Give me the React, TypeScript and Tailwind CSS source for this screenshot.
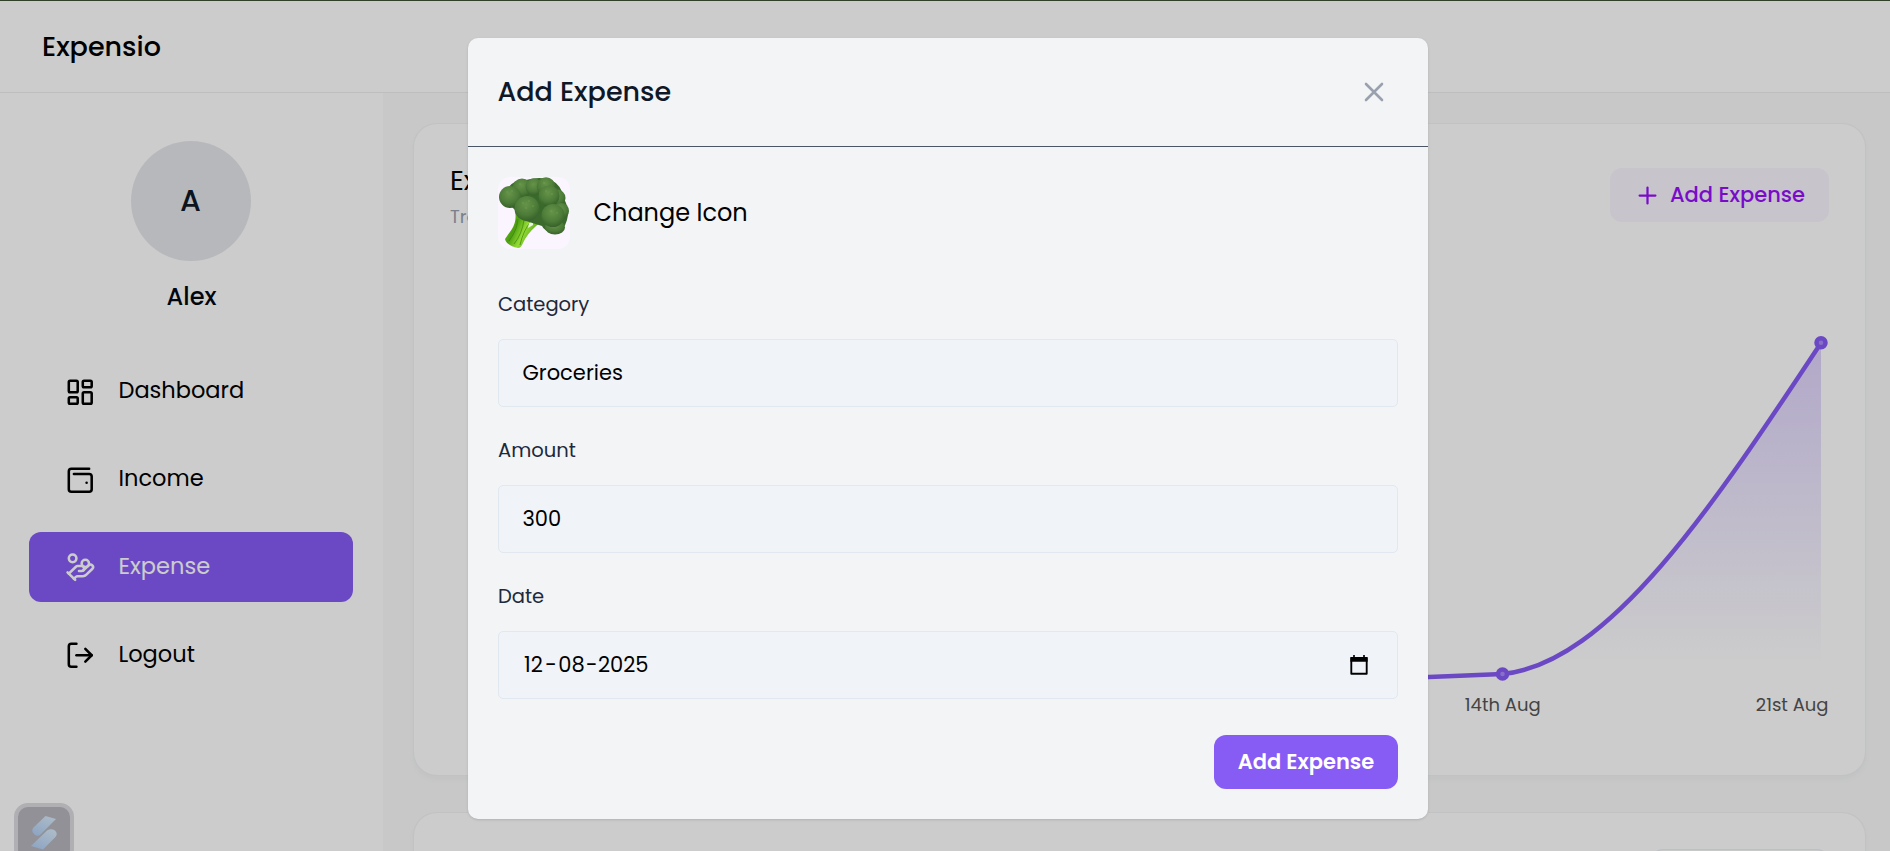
import type { ReactNode } from "react";
import { HandCoins, LayoutDashboard, LogOut, Plus, WalletMinimal } from "lucide-react";

function NavItem({ icon, label, active = false }: { icon: ReactNode; label: string; active?: boolean }) {
  return (
    <button
      className={`flex h-[70px] w-full items-center gap-[23.5px] rounded-xl pl-[35.5px] text-[22.5px] ${
        active ? "bg-[#875cf5] text-white" : "text-black"
      }`}
    >
      {icon}
      <span>{label}</span>
    </button>
  );
}

function Sidebar() {
  return (
    <aside className="flex w-[383px] shrink-0 flex-col bg-white px-[29px] pt-12">
      <div className="flex flex-col items-center">
        <div className="flex size-[120px] -translate-x-px items-center justify-center rounded-full bg-gray-200 text-3xl font-medium text-gray-900">
          A
        </div>
        <p className="mt-[22px] text-2xl leading-[28px] font-medium text-gray-950">Alex</p>
      </div>
      <nav className="mt-[45px] flex w-[324px] flex-col gap-[18px]">
        <NavItem icon={<LayoutDashboard size={30.5} className="translate-y-px" />} label="Dashboard" />
        <NavItem icon={<WalletMinimal size={30.5} className="translate-y-px" />} label="Income" />
        <NavItem icon={<HandCoins size={30.5} />} label="Expense" active />
        <NavItem icon={<LogOut size={30.5} />} label="Logout" />
      </nav>
    </aside>
  );
}

function Chart() {
  return (
    <svg width="1379" height="420" viewBox="450 300 1379 420" className="mt-[78px] block overflow-visible">
      <defs>
        <linearGradient id="area" x1="0" y1="343" x2="0" y2="680" gradientUnits="userSpaceOnUse">
          <stop offset="5%" stopColor="#875cf5" stopOpacity="0.26" />
          <stop offset="95%" stopColor="#875cf5" stopOpacity="0" />
        </linearGradient>
      </defs>
      <path
        d="M1184 681C1290 678 1396 678 1502.5 674C1608.7 664 1714.8 503.6 1821 343V681H1184Z"
        fill="url(#area)"
      />
      <path
        d="M1184 687C1290 682 1396 677.5 1502.5 674C1608.7 664 1714.8 503.6 1821 343"
        fill="none"
        stroke="#875cf5"
        strokeWidth="4.5"
      />
      {[
        [1502.5, 674],
        [1821, 342.7],
      ].map(([x, y]) => (
        <circle key={x} cx={x} cy={y} r="4.5" fill="#ab8df8" stroke="#875cf5" strokeWidth="4.5" />
      ))}
      <g className="fill-[#555555] text-[18px]">
        <text x="1502.7" y="711" textAnchor="middle">14th Aug</text>
        <text x="1828.5" y="711" textAnchor="end">21st Aug</text>
      </g>
    </svg>
  );
}

function Content() {
  return (
    <main className="flex grow flex-col gap-9 overflow-hidden bg-[#fafafa] pt-[30px] pr-6 pl-[30px]">
      <section className="h-[653px] shrink-0 rounded-3xl border border-gray-200/50 bg-white px-9 pt-[44px] shadow-md shadow-gray-100">
        <div className="flex h-[54px] items-start justify-between">
          <div className="w-[130px] overflow-hidden whitespace-nowrap">
            <h5 className="text-[27px] leading-[25px] text-black">Expense Overview</h5>
            <p className="mt-[10px] text-lg leading-[27px] text-gray-400">Track your spending trends over time.</p>
          </div>
          <button className="flex h-[54px] items-center gap-[9px] rounded-xl bg-purple-50 px-6 text-[21px] font-medium whitespace-nowrap text-purple-600">
            <Plus size={27} strokeWidth={2} />
            Add Expense
          </button>
        </div>
        <Chart />
      </section>
      <section className="h-[300px] shrink-0 rounded-3xl border border-gray-200/50 bg-white px-9 pt-9 shadow-md shadow-gray-100">
        <div className="ml-auto h-[54px] w-[178px] rounded-xl border border-gray-200/60 bg-gray-50" />
      </section>
    </main>
  );
}

function Badge() {
  return (
    <div className="absolute top-[803px] left-[14px] flex size-[60px] justify-center rounded-[14px] border-4 border-[#dcdce1] bg-[#b6b6bd] pt-[7px]">
      <svg width="30" height="38" viewBox="0 0 30 38">
        <defs>
          <linearGradient id="bolt" x1="0.8" y1="0" x2="0.2" y2="1">
            <stop offset="0" stopColor="#d8eafa" />
            <stop offset="1" stopColor="#b1cff5" />
          </linearGradient>
        </defs>
        <path d="M16.5 2L27 5 11.5 20.5Q8.500 23 5.500 20.500Q1.500 17 4.500 13.500Z" fill="url(#bolt)" />
        <path d="M18 16.500Q22 13.800 26 16.500Q29.500 20 26 23.500L14 35.500 2 32Z" fill="url(#bolt)" />
      </svg>
    </div>
  );
}

function Broccoli() {
  return (
    <svg width="72" height="72" viewBox="0 0 72 72">
      <defs>
        <radialGradient id="floret" cx="0.46" cy="0.34" r="0.7">
          <stop offset="0" stopColor="#669449" />
          <stop offset="0.6" stopColor="#4d7c39" />
          <stop offset="1" stopColor="#345d28" />
        </radialGradient>
        <linearGradient id="stem" x1="0" y1="0" x2="1" y2="0.5">
          <stop offset="0" stopColor="#8fd42c" />
          <stop offset="0.4" stopColor="#4c9e10" />
          <stop offset="0.65" stopColor="#94dc34" />
          <stop offset="1" stopColor="#4b9414" />
        </linearGradient>
      </defs>
      <path d="M17 34Q19 44 14 52L7 62Q8 68 20 71Q23 71 25 66Q29 57 38 49L43 45 26 33Z" fill="url(#stem)" />
      <path d="M19 42Q21 50 11 64M26 43Q24 57 16 67M33 44Q25 54 22 68" fill="none" stroke="#367d0c" strokeWidth="1" opacity="0.65" />
      <path d="M31 46L35 44 35 48 30 51Z" fill="#e9f4df" />
      <path d="M8 14Q14 2 28 3 42-1 53 3 64 8 66 22 72 32 69 43 66 55 55 56 46 54 44 49L28 44 17 33 10 26Z" fill="#3b6a2c" />
      <g fill="url(#floret)">
        <circle cx="24" cy="11" r="9.500" />
        <circle cx="36" cy="10" r="8.500" />
        <circle cx="48" cy="9.500" r="9.300" />
        <circle cx="59" cy="21" r="8.500" />
        <circle cx="51" cy="19" r="10.500" />
        <circle cx="12" cy="20" r="11" />
        <ellipse cx="57" cy="50.500" rx="10" ry="7" />
        <circle cx="63" cy="34" r="8" />
        <circle cx="55" cy="38.500" r="11.500" />
        <circle cx="29" cy="31.500" r="12.500" />
      </g>
      <g fill="#7aa75a" opacity="0.35">
        <circle cx="25" cy="26" r="1" /><circle cx="31" cy="24" r="1" /><circle cx="35" cy="29" r="1" />
        <circle cx="9" cy="15" r="1" /><circle cx="14" cy="14" r="1" /><circle cx="48" cy="14" r="1" />
        <circle cx="54" cy="17" r="1" /><circle cx="53" cy="34" r="1" /><circle cx="59" cy="36" r="1" />
        <circle cx="22" cy="7" r="1" /><circle cx="46" cy="6" r="1" /><circle cx="28" cy="31" r="1" />
      </g>
    </svg>
  );
}

function Field({ label, className, children }: { label: string; className: string; children: ReactNode }) {
  return (
    <div className={className}>
      <label className="block text-[19.5px] leading-6 text-slate-800">{label}</label>
      <div className="mt-[22px] flex h-[68px] items-center justify-between rounded-[5px] border border-slate-200 bg-[#f0f4f9] pr-[27px] pl-[23.5px] text-[21px] text-black">
        {children}
      </div>
    </div>
  );
}

function Modal() {
  return (
    <div className="absolute inset-0 flex justify-center bg-black/20 pt-[38px] pl-1.5">
      <div className="h-[781px] w-[960px] rounded-[10px] bg-gray-100 shadow-sm">
        <div className="flex h-[109px] items-center justify-between border-b border-gray-600 pr-[44px] pl-[29.5px]">
          <h3 className="text-[27px] font-medium text-gray-900">Add Expense</h3>
          <svg width="20" height="20" viewBox="0 0 20 20" fill="none" stroke="#99a1af" strokeWidth="2.6" strokeLinecap="round">
            <path d="M2 2L18 18M18 2L2 18" />
          </svg>
        </div>
        <div className="p-[30px]">
          <div className="flex items-center gap-[23.5px]">
            <div className="size-[72px] overflow-hidden rounded-xl bg-purple-50">
              <Broccoli />
            </div>
            <p className="text-2xl text-black">Change Icon</p>
          </div>
          <Field label="Category" className="mt-[44px]">
            <span>Groceries</span>
          </Field>
          <Field label="Amount" className="mt-8">
            <span>300</span>
          </Field>
          <Field label="Date" className="mt-8">
            <span className="flex text-center">
              <span className="w-[22px]">12</span>
              <span className="w-[13px]">-</span>
              <span className="w-[28px]">08</span>
              <span className="w-[12.5px]">-</span>
              <span>2025</span>
            </span>
            <svg width="22" height="22" viewBox="0 0 20 20">
              <path d="M3 3.500H17V18H3Z" fill="none" stroke="#000" strokeWidth="1.700" strokeLinejoin="round" />
              <path d="M2.200 3H17.800V7H2.200ZM4.700 1H6.200V4H4.700ZM13.800 1H15.300V4H13.800Z" fill="#000" />
            </svg>
          </Field>
          <div className="mt-9 flex justify-end">
            <button className="h-[54px] w-[184px] rounded-xl bg-[#875cf5] text-[21px] font-semibold whitespace-nowrap text-white">
              Add Expense
            </button>
          </div>
        </div>
      </div>
    </div>
  );
}

export default function App() {
  return (
    <div className="relative flex h-[851px] w-full flex-col overflow-hidden bg-white font-['Poppins','Inter',sans-serif]">
      <header className="flex h-[93px] shrink-0 items-center border-t border-b border-t-[#3d5035] border-b-gray-200/70 bg-white pt-0.5 pl-[42px]">
        <h2 className="text-[27px] font-medium text-black">Expensio</h2>
      </header>
      <div className="flex min-h-0 grow">
        <Sidebar />
        <Content />
      </div>
      <Badge />
      <Modal />
    </div>
  );
}
